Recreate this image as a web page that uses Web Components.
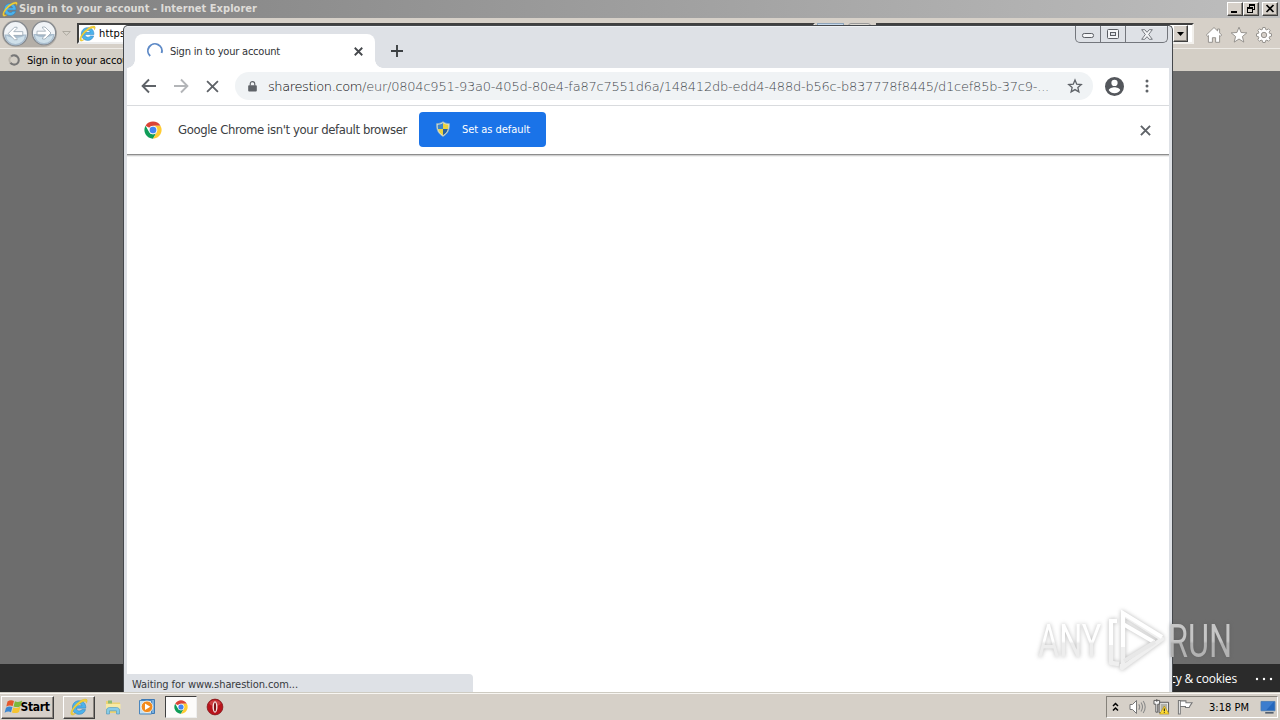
<!DOCTYPE html>
<html lang="en">
<head>
<meta charset="utf-8">
<title>Desktop</title>
<style>
html,body{margin:0;width:1280px;height:720px;overflow:hidden}
body{font-family:"DejaVu Sans Condensed","DejaVu Sans",sans-serif;font-size:11px;color:#000}
</style>
</head>
<body>
<desk-top></desk-top>
<script>
const define = (name, html) => customElements.define(name, class extends HTMLElement {
  constructor() {
    super();
    const t = document.createElement('template');
    t.innerHTML = html;
    this.attachShadow({mode: 'open'}).append(t.content.cloneNode(true));
  }
});

/* A one-line label whose tracking is adjusted to fill a given width. */
customElements.define('ui-label', class extends HTMLElement {
  constructor() {
    super();
    this.attachShadow({mode: 'open'}).innerHTML =
      '<style>:host{display:block;white-space:pre;flex:none;overflow:visible}span{display:inline-block;font-variant-ligatures:none}</style><span><slot></slot></span>';
  }
  connectedCallback() {
    const w = +this.getAttribute('w');
    this.style.width = w + 'px';
    requestAnimationFrame(() => this.fit(w));
    this.fit(w);
  }
  fit(w) {
    const s = this.shadowRoot.querySelector('span');
    s.style.letterSpacing = '0';
    const n = this.textContent.length, m = s.getBoundingClientRect().width;
    if (m && n) s.style.letterSpacing = ((w - m) / n) + 'px';
  }
});

/* Icons, chosen by the name attribute. */
const ICONS = {
  ie: ['0 0 16 16', '<path d="M14 9H5.700c.2 1.800 1.200 2.500 2.600 2.500 1.100 0 1.900-.4 2.400-1.200h3.100C13 12.900 11 14.500 8.200 14.500 4.700 14.500 2.200 12.100 2.200 8.500S4.700 2.500 8.100 2.500c3.900 0 6.100 2.500 5.900 6.500zM5.800 6.900h4.800C10.400 5.700 9.500 5.100 8.200 5.100 6.900 5.100 6.100 5.700 5.800 6.900z" fill="#4cb3ec" stroke="#2b7fc0" stroke-width=".5"/><path d="M1.200 14.900C-.7 12.800 3.500 6.200 8.300 3 12 .6 15.300.3 15.300 2.300c0 .8-.3 1.500-.8 2.300.1-1.500-.6-2-2.200-1.600C8.700 3.800 2 10.200 2.100 13.200c.1 1 1.300 1.100 3.200.2-1.600 1.500-3.300 2.300-4.100 1.500z" fill="#f5d336" stroke="#d0a828" stroke-width=".3"/>'],
  chrome: ['0 0 48 48', '<circle cx="24" cy="24" r="23" fill="#fff"/><path d="M4.100 12.500A23 23 0 0 1 43.900 12.500H24A11.500 11.500 0 0 0 14 18.300Z" fill="#db4437"/><path d="M4.100 12.500A23 23 0 0 0 24 47L34 29.700A11.500 11.500 0 0 1 14 29.700Z" fill="#0f9d58"/><path d="M24 47A23 23 0 0 0 43.900 12.500H24A11.500 11.500 0 0 1 34 29.700Z" fill="#fc3"/><circle cx="24" cy="24" r="11" fill="#f1f1f1"/><circle cx="24" cy="24" r="8.800" fill="#4285f4"/>'],
  shield: ['0 0 16 16', '<path d="M8 .7C6.500 2 4 2.600 1.500 2.700 1.300 8.500 3.300 13 8 15.400 12.700 13 14.700 8.500 14.500 2.700 12 2.600 9.500 2 8 .7Z" fill="#dfe3d5" stroke="#8fb0bb" stroke-width=".8"/><path d="M8 2C6.500 3 4.700 3.500 2.700 3.700c-.1 1.500 0 3 .4 4.300H8Z" fill="#3c86cb"/><path d="M8 2c1.500 1 3.300 1.500 5.300 1.700.1 1.500 0 3-.4 4.300H8ZM3.100 8c.8 2.800 2.400 5 4.900 6.200V8Z" fill="#ecd33f"/><path d="M12.900 8c-.8 2.800-2.400 5-4.900 6.200V8Z" fill="#27619f"/>'],
  lock: ['0 0 10 12', '<path d="M1.200 4.500h7.600a1 1 0 0 1 1 1v5a1 1 0 0 1-1 1H1.200a1 1 0 0 1-1-1v-5a1 1 0 0 1 1-1Z" fill="#5f6368"/><path d="M2.500 5V3a2.500 2.500 0 0 1 5 0v2" fill="none" stroke="#5f6368" stroke-width="1.300"/>'],
  spin: ['0 0 16 16', '<path d="M3.200 13A7 7 0 1 1 14.600 10" fill="none" stroke="#5e8ac7" stroke-width="1.900"/>'],
  spin2: ['0 0 14 14', '<path d="M3.300 2.700A5 5 0 1 1 2.500 9.300" fill="none" stroke="#777" stroke-width="2.200"/><path d="M2.500 9.300A5 5 0 0 1 3.300 2.700" fill="none" stroke="#bbb6ad" stroke-width="2"/>'],
  back: ['0 0 16 16', '<path d="M15 8H2M8 1.500 1.600 8 8 14.500" fill="none" stroke="currentColor" stroke-width="1.900"/>'],
  fwd: ['0 0 16 16', '<path d="M1 8h13M8 1.500 14.400 8 8 14.500" fill="none" stroke="currentColor" stroke-width="1.900"/>'],
  cross: ['0 0 12 12', '<path d="M1 1l10 10M11 1 1 11" fill="none" stroke="currentColor" stroke-width="var(--sw,1.800)"/>'],
  plus: ['0 0 12 12', '<path d="M6 0v12M0 6h12" stroke="#3c4043" stroke-width="1.900"/>'],
  star: ['0 0 24 24', '<path d="m12 3 2.600 6.200 6.800.6-5.100 4.500 1.500 6.600L12 17.400l-5.800 3.500 1.500-6.600-5.100-4.500 6.800-.6Z" fill="none" stroke="#5f6368" stroke-width="2"/>'],
  user: ['2 2 20 20', '<path d="M12 2a10 10 0 1 0 0 20 10 10 0 0 0 0-20Zm0 3a3.300 3.300 0 1 1 0 6.600A3.300 3.300 0 0 1 12 5Zm0 14.200a7.200 7.200 0 0 1-6-3.200c0-2 4-3.100 6-3.100s6 1.100 6 3.100a7.200 7.200 0 0 1-6 3.200Z" fill="#54575c"/>'],
  dots: ['0 0 4 14', '<circle cx="2" cy="2" r="1.500" fill="#5f6368"/><circle cx="2" cy="7" r="1.500" fill="#5f6368"/><circle cx="2" cy="12" r="1.500" fill="#5f6368"/>'],
  wmin: ['0 0 14 8', '<rect x="1.500" y="3.500" width="11" height="4" rx="1.800" fill="#f4f5f7" stroke="#5b5e64"/>'],
  wmax: ['0 0 12 10', '<rect x=".5" y=".5" width="11" height="9" rx="1" fill="#f4f5f7" stroke="#5b5e64"/><rect x="3.500" y="3.500" width="5" height="3" fill="#dee1e6" stroke="#5b5e64"/>'],
  wx: ['0 0 12 11', '<path d="M.7.700h3L6 3.300 8.300.700h3L7.700 5.500l3.600 4.800h-3L6 7.700 3.700 10.300h-3L4.300 5.500Z" fill="#f4f5f7" stroke="#5b5e64" stroke-width=".8"/>'],
  cmin: ['0 0 12 10', '<path d="M2 7h6v2H2z"/>'],
  crest: ['0 0 12 10', '<path d="M4 0h6v6H8v3H2V3h2Zm1 2v1h3v2h1V2ZM3 5v3h4V5Z" fill-rule="evenodd"/>'],
  cx: ['0 0 12 10', '<path d="m2.500 1 7 7M9.500 1l-7 7" stroke="#000" stroke-width="1.700"/>'],
  caret: ['0 0 7 4', '<path d="M0 0h7L3.500 4Z"/>'],
  caret2: ['0 0 9 5', '<path d="M.7.500h7.600L4.500 4.300Z" fill="#d8d4cc" stroke="#a29e96" stroke-width=".8"/>'],
  navb: ['0 0 26 26', '<circle cx="13" cy="13" r="11.700" fill="#f1f4f7" stroke="#85898e" stroke-width="1.300"/><path d="M2.500 14a10.500 10.500 0 0 0 21 0Z" fill="#a9bdce"/><path d="M4 15a9 8 0 0 0 18 0c-5 3-13 3-18 0Z" fill="#cfe0ea"/><path d="M12 7 6 13l6 6h2.500v-1L11.300 14.800H20v-3.600h-8.700L14.500 8V7Z" fill="#fff" stroke="#9aa8b4" stroke-width=".8"/>'],
  navf: ['0 0 26 26', '<circle cx="13" cy="13" r="11.700" fill="#f1f4f7" stroke="#85898e" stroke-width="1.300"/><path d="M2.500 14a10.500 10.500 0 0 0 21 0Z" fill="#a9bdce"/><path d="M4 15a9 8 0 0 0 18 0c-5 3-13 3-18 0Z" fill="#cfe0ea"/><path d="m14 7 6 6-6 6h-2.500v-1l3.200-3.200H6v-3.600h8.700L11.500 8V7Z" fill="#fff" stroke="#9aa8b4" stroke-width=".8"/>'],
  home: ['0 0 18 18', '<path d="M9 1.500 1.300 9l1.200 1.200.9-.7v6.800h4v-4.600h3.200v4.600h4V9.500l.9.700L16.700 9l-2.100-2.100V3h-2v2Z" fill="#fff" stroke="#8d8a86" stroke-width=".9"/>'],
  fav: ['0 0 18 18', '<path d="m9 1.200 2.100 5.300 5.700.4-4.400 3.600 1.400 5.600L9 13l-4.800 3.100 1.400-5.600L1.200 6.900l5.700-.4Z" fill="#fff" stroke="#8d8a86" stroke-width=".9"/>'],
  gear: ['0 0 18 18', '<g fill="#fff" stroke="#8d8a86" stroke-width=".9"><path d="m7.800 1.500 2.400 0 .4 1.900 1.300.5 1.600-1.100 1.700 1.700-1.100 1.600.5 1.300 1.900.4v2.400l-1.900.4-.5 1.300 1.100 1.600-1.700 1.700-1.600-1.100-1.300.5-.4 1.900H7.800l-.4-1.900-1.300-.5-1.600 1.100-1.700-1.700 1.100-1.600-.5-1.300-1.900-.4V7.800l1.900-.4.5-1.300-1.100-1.600 1.700-1.700 1.600 1.100 1.300-.5Z"/><circle cx="9" cy="9" r="2.700" fill="#d5cfc8"/></g>'],
  flag: ['0 0 17 16', '<path d="M1.500 2.500C3.700.9 6 1 8 2L6.700 7C4.700 6 2.300 6.200.3 7.600Z" fill="#e4572b"/><path d="M8.900 2.300c2.300 1 4.800.9 7.300-.7l-1.500 5.300c-2.400 1.500-4.800 1.400-7.100.5Z" fill="#7cb83b"/><path d="M0 8.700C2 7.300 4.400 7.200 6.400 8.100L5 13.200C3 12.200.8 12.400-1.400 13.800Z" fill="#3a86d1"/><path d="M7.300 8.400c2.300.8 4.700.8 7.100-.6L13 12.900c-2.400 1.500-4.800 1.500-7.100.5Z" fill="#f5c431"/>'],
  folder: ['0 0 18 18', '<path d="M2 3h5l1 1.500h8V15H2Z" fill="#ecd273"/><path d="M4 2.500h4v3H4z" fill="#8dba72"/><path d="M2 6h14.500v5H2Z" fill="#f7eaa5"/><path d="M2.500 16v-3.500c0-2.200 1.500-3 3-3h7c1.700 0 3 .8 3 3V16h-3v-3.200h-7V16Z" fill="#86cbe8" stroke="#4c96c0" stroke-width=".6"/>'],
  media: ['0 0 18 18', '<path d="M3.500 1.500h13v14h-13z" fill="#7cb0dd" stroke="#3d79b5"/><path d="M1.500 2.500h12v13.500h-12z" fill="#c3dff2" stroke="#4b86bd"/><circle cx="9" cy="8.800" r="5.800" fill="#f28a1c" stroke="#fff" stroke-width=".7"/><path d="m7 5.500 5.300 3.300L7 12.100Z" fill="#fff"/>'],
  opera: ['0 0 18 18', '<circle cx="9" cy="9" r="7.900" fill="#b9141c" stroke="#790c10" stroke-width=".7"/><ellipse cx="9" cy="5.200" rx="5.500" ry="3" fill="#dc6262" opacity=".55"/><ellipse cx="9" cy="9" rx="2.500" ry="5.800" fill="#f8e9e9"/><ellipse cx="9" cy="9" rx="1.100" ry="4.500" fill="#7d1316"/>'],
  chev: ['0 0 7 10', '<path d="m1 4 2.500-2.500L6 4M1 8.500 3.500 6 6 8.500" fill="none" stroke="#000" stroke-width="1.500"/>'],
  vol: ['0 0 17 16', '<path d="M1 5.500h2.500L7.500 1.500v13L3.500 10.500H1Z" fill="#fff" stroke="#777"/><path d="M9.800 5.200q1.800 2.800 0 5.600M12 3.500q3 4.500 0 9M14.200 2q4 6 0 12" fill="none" stroke="#8b8b8b" stroke-width="1.100"/>'],
  net: ['0 0 18 17', '<path d="M6.500 3.500h10v11h-10z" fill="#eee" stroke="#555"/><path d="M8 5h7v8H8z" fill="#b1b1a9"/><path d="M1 1.500h6v4H5V14H3V5.500H1Z" fill="#f5f5f5" stroke="#555"/><path d="M4 0v3" stroke="#555"/><path d="m12 7.500 5 8.500H7Z" fill="#ffdc32" stroke="#b18d12" stroke-width=".7"/><path d="M12 10v3m0 1v1" stroke="#222" stroke-width="1.200"/>'],
  pennant: ['0 0 17 17', '<path d="M1.500 1.500h2V16h-2ZM3.500 2h6v2h6.500l-2 3-1 2H9V8H3.500Z" fill="#fff" stroke="#777" stroke-width="1.100"/>'],
  screen: ['0 0 16 14', '<path d="M.5.500h15v10H.5z" fill="#2467bd" stroke="#4f7fb7"/><path d="m1 1 13 0-8 9H1Z" fill="#4c8cd8" opacity=".6"/><path d="M5 12h9v1.500H5z" fill="#3c4c60"/>'],
  more: ['0 0 20 4', '<circle cx="3" cy="2" r="1.200" fill="#fff"/><circle cx="10" cy="2" r="1.200" fill="#fff"/><circle cx="17" cy="2" r="1.200" fill="#fff"/>']
};
customElements.define('ui-icon', class extends HTMLElement {
  connectedCallback() {
    const [vb, body] = ICONS[this.getAttribute('name')];
    const w = this.getAttribute('w'), h = this.getAttribute('h') || w;
    this.attachShadow({mode: 'open'}).innerHTML =
      `<style>:host{display:block;flex:none;width:${w}px;height:${h}px}svg{display:block;overflow:visible}</style><svg width="${w}" height="${h}" viewBox="${vb}">${body}</svg>`;
  }
});

define('classic-button', `<style>
:host{display:flex;align-items:center;justify-content:center;box-sizing:border-box;background:#d6d0c9;border:1px solid;border-color:#fff #404040 #404040 #fff;box-shadow:inset -1px -1px #8d8881;flex:none}
</style><slot></slot>`);

define('ie-window', `<style>
:host{display:grid;grid-template-rows:18px 30px 23px 593px 28px;height:692px;background:#6d6d6d}
.title{display:flex;align-items:center;background:linear-gradient(90deg,#7f7f7f,#bebebe);padding:0 2px}
.title ui-label{font:bold 11px "DejaVu Sans Condensed","DejaVu Sans",sans-serif;color:#dedcd8;margin-left:1px;line-height:16px}
.title .sp{flex:1}
classic-button{width:16px;height:14px}
.nav{display:flex;align-items:center;background:#d6d0c8;padding:1px 7px 0 2px}
.pair{display:flex;gap:2px;border-radius:14px;background:#b4afa8;flex:none}
.addr{box-sizing:border-box;display:flex;align-items:center;width:738px;height:21px;margin-left:6px;background:#fff;border:2px solid #404040;border-right-color:#eee;border-bottom-color:#eee}
.mid{display:flex;gap:4px;width:61px;height:22px;padding-left:2px;box-sizing:border-box}
.mid i{width:27px;height:19px;background:#c6d8eb;border:1px solid #8ea4ba;box-sizing:border-box}
.mid i+i{background:#dedbd5;border-color:#999;border-radius:3px;width:23px}
.search{box-sizing:border-box;display:flex;justify-content:flex-end;width:318px;height:21px;background:#fff;border:2px solid #404040;border-right-color:#f2f0ec;border-bottom-color:#f2f0ec;padding-right:4px}
.tools{display:flex;gap:7px;margin:2px 0 0 auto}
.tabs{display:flex;align-items:center;background:#d4cfc6;padding:0 8px;border-top:1px solid #eeebe6;box-sizing:border-box}
.foot{display:flex;align-items:center;justify-content:flex-end;background:#2b2b2b;color:#fff;grid-row:5;padding:1px 6px 0 0;font:12px "Open Sans","Noto Sans",sans-serif}
</style>
<div class="title"><ui-icon name="ie" w="16"></ui-icon><ui-label w="238">Sign in to your account - Internet Explorer</ui-label><span class="sp"></span>
<classic-button><ui-icon name="cmin" w="12" h="10"></ui-icon></classic-button><classic-button><ui-icon name="crest" w="12" h="10"></ui-icon></classic-button><classic-button style="margin-left:3px"><ui-icon name="cx" w="12" h="10"></ui-icon></classic-button></div>
<div class="nav"><div class="pair"><ui-icon name="navb" w="27"></ui-icon><ui-icon name="navf" w="26"></ui-icon></div><ui-icon name="caret2" w="9" h="5" style="margin-left:5px"></ui-icon>
<div class="addr"><ui-icon name="ie" w="17"></ui-icon><ui-label w="30" style="margin-left:3px">https:</ui-label></div><div class="mid"><i></i><i></i></div><div class="search"><classic-button style="width:15px;height:17px"><ui-icon name="caret" w="7" h="4"></ui-icon></classic-button></div>
<div class="tools"><ui-icon name="home" w="18"></ui-icon><ui-icon name="fav" w="18"></ui-icon><ui-icon name="gear" w="18"></ui-icon></div></div>
<div class="tabs"><ui-icon name="spin2" w="13"></ui-icon><ui-label w="111" style="margin-left:6px">Sign in to your account</ui-label></div>
<div class="foot"><ui-label w="94">Privacy &amp; cookies</ui-label><ui-icon name="more" w="20" h="4" style="margin-left:17px"></ui-icon></div>`);

define('caption-buttons', `<style>
:host{display:flex;align-self:flex-start;height:17px;border:1px solid #73767c;border-top:0;border-radius:0 0 5px 5px;box-sizing:border-box}
div{display:flex;align-items:center;justify-content:center;width:24px;border-right:1px solid #73767c}
div:last-child{width:41px;border:0}
</style><div><ui-icon name="wmin" w="14" h="8"></ui-icon></div><div><ui-icon name="wmax" w="12" h="10"></ui-icon></div><div><ui-icon name="wx" w="12" h="11"></ui-icon></div>`);

define('chrome-window', `<style>
:host{display:flex;flex-direction:column;box-sizing:border-box;background:#dee1e6;border:1px solid #45484c;border-bottom:0;border-radius:5px 5px 0 0;padding:0 3px;overflow:hidden}
.strip{display:flex;height:42px;flex:none;box-shadow:inset 0 1px #eef1f4}
.tab{position:relative;display:flex;align-items:center;box-sizing:border-box;width:240px;height:34px;margin:8px 0 0 8px;padding:0 12px;background:#fff;border-radius:8px 8px 0 0;color:#303236}
.tab:before,.tab:after{content:"";position:absolute;bottom:0;width:8px;height:8px}
.tab:before{left:-8px;background:radial-gradient(circle at 0 0,#dee1e6 7.500px,#fff 8px)}
.tab:after{right:-8px;background:radial-gradient(circle at 100% 0,#dee1e6 7.500px,#fff 8px)}
.strip>ui-icon{margin:19px 0 0 16px}
caption-buttons{margin:0 1px 0 auto}
.bar{display:flex;align-items:center;height:38px;box-sizing:border-box;flex:none;background:#fff;border-bottom:1px solid #d9dbde;padding:0 20px 1px 14px;color:#5f6368}
.omni{display:flex;align-items:center;box-sizing:border-box;width:858px;height:28px;border-radius:14px;background:#f0f3f5;margin-left:16px;padding:0 10px 0 13px}
.omni ui-label{line-height:26px;font-weight:200;font-family:"DejaVu Sans","DejaVu Sans Condensed",sans-serif;font-size:13px;padding-top:1px}
.info{display:flex;align-items:center;height:48px;box-sizing:border-box;flex:none;background:#fff;padding:0 18px 2px 17px;color:#3c4043;position:relative;box-shadow:0 1px #8d8d8d,0 2px #d0d0d0,0 3px #f0f0f0}
.info>ui-label{font-size:13px}
.info>ui-icon{margin-top:2px}
.btn{display:flex;align-items:center;box-sizing:border-box;width:127px;height:35px;background:#1a73e8;border-radius:4px;color:#fff;margin-left:12px;padding-left:16px}
.page{display:flex;align-items:flex-end;flex:1;background:#fff}
.status{box-sizing:border-box;width:346px;height:18px;background:#dee1e6;border-radius:0 4px 0 0;padding:4px 0 0 5px;color:#36393d;line-height:14px}
</style>
<div class="strip"><div class="tab"><ui-icon name="spin" w="16"></ui-icon><ui-label w="110" style="margin-left:7px">Sign in to your account</ui-label><ui-icon name="cross" w="9" style="margin-left:auto;color:#45484c;--sw:2.400"></ui-icon></div><ui-icon name="plus" w="12"></ui-icon><caption-buttons></caption-buttons></div>
<div class="bar"><ui-icon name="back" w="16"></ui-icon><ui-icon name="fwd" w="16" style="margin-left:16px;color:#b3b5b8"></ui-icon><ui-icon name="cross" w="13" style="margin-left:17px;--sw:1.700"></ui-icon>
<div class="omni"><ui-icon name="lock" w="9" h="11"></ui-icon><ui-label w="94" style="margin-left:11px;color:#000">sharestion.com</ui-label><ui-label w="687" style="color:#464a4f">/eur/0804c951-93a0-405d-80e4-fa87c7551d6a/148412db-edd4-488d-b56c-b837778f8445/d1cef85b-37c9-...</ui-label><ui-icon name="star" w="16" style="margin-left:auto"></ui-icon></div>
<ui-icon name="user" w="19" style="margin-left:12px"></ui-icon><ui-icon name="dots" w="4" h="14" style="margin-left:21px"></ui-icon></div>
<div class="info"><ui-icon name="chrome" w="18"></ui-icon><ui-label w="229" style="margin-left:16px">Google Chrome isn't your default browser</ui-label><div class="btn"><ui-icon name="shield" w="16"></ui-icon><ui-label w="68" style="margin-left:11px">Set as default</ui-label></div><ui-icon name="cross" w="11" style="margin-left:auto;color:#5f6368;--sw:2.100"></ui-icon></div>
<div class="page"><div class="status"><ui-label w="166">Waiting for www.sharestion.com...</ui-label></div></div>`);

define('task-bar', `<style>
:host{display:flex;align-items:center;box-sizing:border-box;height:28px;background:#d6d0c8;border-top:1px solid #cecbc2;box-shadow:inset 0 1px #f8f6f2;padding:1px 2px 0 1px}
.start{width:53px;height:23px;font-weight:bold;font-size:12px}
.start ui-label{margin-left:-2px}
.app{width:32px;height:23px}
.on{display:flex;align-items:center;justify-content:center;box-sizing:border-box;width:32px;height:22px;background:#fcfbfa;border:1px solid;border-color:#404040 #eee #eee #404040}
.tray{display:flex;align-items:center;box-sizing:border-box;margin-left:auto;width:172px;height:22px;border:1px solid;border-color:#85817a #fff #fff #85817a;padding:0 1px 0 5px}
</style>
<classic-button class="start"><ui-icon name="flag" w="17" h="16"></ui-icon><ui-label w="29">Start</ui-label></classic-button>
<classic-button class="app" style="margin-left:9px"><ui-icon name="ie" w="18"></ui-icon></classic-button>
<ui-icon name="folder" w="18" style="margin-left:9px"></ui-icon><ui-icon name="media" w="18" style="margin-left:16px"></ui-icon>
<div class="on" style="margin-left:9px"><ui-icon name="chrome" w="14"></ui-icon></div><ui-icon name="opera" w="18" style="margin-left:9px"></ui-icon>
<div class="tray"><ui-icon name="chev" w="7" h="10"></ui-icon><ui-icon name="vol" w="17" h="16" style="margin-left:10px"></ui-icon><ui-icon name="net" w="17" h="16" style="margin-left:7px"></ui-icon><ui-icon name="pennant" w="16" style="margin-left:7px"></ui-icon><ui-label w="40" style="margin-left:16px">3:18 PM</ui-label><ui-icon name="screen" w="16" h="13" style="margin-left:auto"></ui-icon></div>`);

define('any-run', `<style>
:host{display:flex;align-items:center;font:47px/48px "Roboto","Open Sans",sans-serif;filter:drop-shadow(0 0 2px rgba(80,80,80,.4))}
span{display:block;white-space:nowrap}
b{font-weight:400;display:inline-block;transform-origin:0 50%;-webkit-background-clip:text;background-clip:text;color:transparent}
.a{width:63px}.a b{transform:scaleX(.69);background-image:linear-gradient(#fff 50%,#ededed 55%)}
.r{width:62px}.r b{transform:scaleX(.69);background-image:linear-gradient(#c6c6c6 50%,#b2b2b2 55%)}
svg{flex:none;margin:0 3px 0 6px}
</style><span class="a"><b>ANY</b></span><svg width="58" height="64" viewBox="0 0 58 64"><path d="M16 56V5l39 25-40 29v-4M10 12H4v42l8 1" fill="none" stroke="#efefef" stroke-width="4.500" stroke-linejoin="round"/><path d="M16 38V4l39 24M16 15l31 18M10 12H4v24" fill="none" stroke="#fff" stroke-width="4"/><path d="M17 52 48 33" fill="none" stroke="#e8e8e8" stroke-width="4"/></svg><span class="r"><b>RUN</b></span>`);

define('desk-top', `<style>
:host{display:block;position:relative;width:1280px;height:720px;overflow:hidden}
chrome-window{position:absolute;left:123px;top:25px;width:1050px;height:667px}
any-run{position:absolute;left:1038px;top:609px}
</style><ie-window></ie-window><task-bar></task-bar><chrome-window></chrome-window><any-run></any-run>`);
</script>
</body>
</html>
